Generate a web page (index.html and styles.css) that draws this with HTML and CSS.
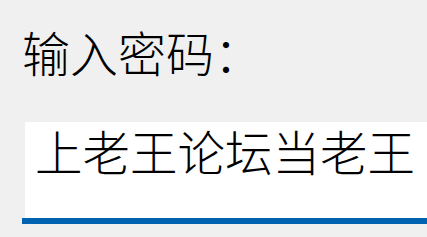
FILE: index.html
```html
<!DOCTYPE html>
<html>
<head>
<meta charset="utf-8">
<link rel="stylesheet" href="styles.css">
</head>
<body>
<div class="page">
  <div class="label">输入密码：</div>
  <div class="field">
    <div class="box"><span class="value">上老王论坛当老王</span></div>
    <div class="underline"></div>
  </div>
</div>
</body>
</html>
```

FILE: styles.css
```css
html, body {
  margin: 0;
  padding: 0;
  background: #f0f0f0;
  width: 427px;
  height: 237px;
  overflow: hidden;
}
.page {
  padding: 21px 0 0 22px;
  font-family: "Noto Sans CJK SC", "Noto Sans", sans-serif;
  font-weight: 300;
  color: #000;
}
.label {
  font-size: 48px;
  line-height: 60px;
  height: 60px;
}
.field {
  margin-top: 41px;
  display: flex;
  flex-direction: column;
}
.box {
  margin-left: 3px;
  background: #fff;
  height: 96px;
  padding-left: 10px;
  white-space: nowrap;
}
.value {
  display: block;
  font-size: 47.5px;
  line-height: 60px;
  margin-top: -1px;
}
.underline {
  height: 6px;
  background: #0063b1;
}
```
